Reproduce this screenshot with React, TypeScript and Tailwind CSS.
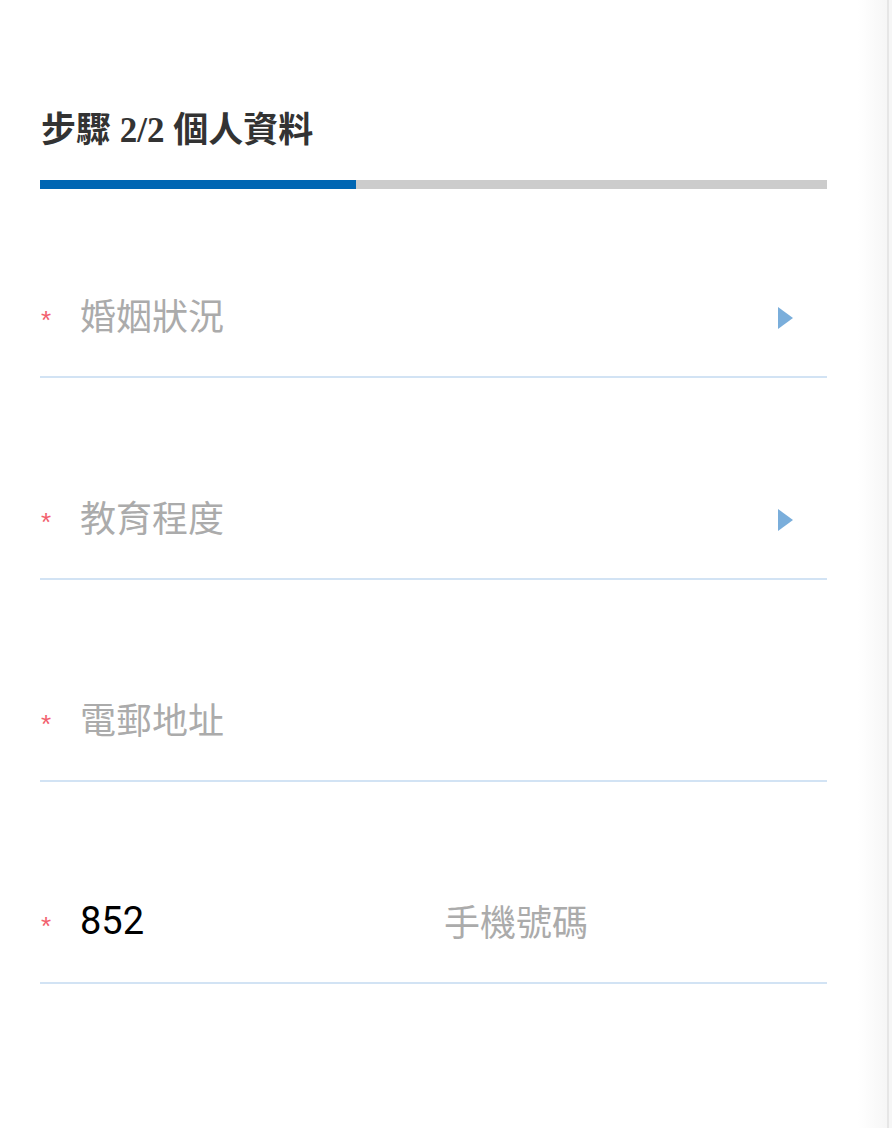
import React from "react";

const Arrow = () => (
  <svg width="15" height="22" viewBox="0 0 15 22" className="mr-[34px] shrink-0 translate-y-[1px]">
    <polygon points="0,0 15,11 0,22" fill="#7aaedb" />
  </svg>
);

const Field = ({
  label,
  arrow,
  first,
  prefix,
}: {
  label: string;
  arrow?: boolean;
  first?: boolean;
  prefix?: string;
}) => (
  <div
    className={`${first ? "mt-[98px]" : "mt-[111px]"} pb-[29px] border-b-2 border-[#d2e3f4]`}
  >
    <div className="flex items-center h-[60px]">
      <div className="w-[40px] shrink-0 flex items-center">
        <span
          className="ml-[1px] text-[26px] leading-none text-[#f2606e] translate-y-[3px]"
          style={{ fontFamily: '"Liberation Sans", sans-serif' }}
        >
          *
        </span>
      </div>
      {prefix && (
        <div
          className="w-[364px] shrink-0 text-[38px] leading-none text-black -translate-y-[2px]"
          style={{ fontFamily: 'Roboto, "Noto Sans CJK TC", sans-serif' }}
        >
          {prefix}
        </div>
      )}
      <div
        className="flex-1 text-[36px] leading-none text-[#ababab] -translate-y-[3px]"
        style={{ fontFamily: '"Noto Sans CJK TC", sans-serif' }}
      >
        {label}
      </div>
      {arrow && <Arrow />}
    </div>
  </div>
);

export default function App() {
  return (
    <div className="flex w-[892px] min-h-[1128px] bg-white">
      <div className="w-[858px] shrink-0 pl-[40px] pr-[31px] pt-[111px] bg-white">
        <h1
          className="text-[35px] leading-[40px] font-bold text-[#333333] ml-[1px]"
          style={{ fontFamily: '"Liberation Serif", "Noto Sans CJK TC", serif' }}
        >
          步驟 2/2 個人資料
        </h1>
        <div className="mt-[29px] h-[9px] flex bg-[#cccccc]">
          <div className="w-[316px] bg-[#0066b3]" />
        </div>
        <Field label="婚姻狀況" arrow first />
        <Field label="教育程度" arrow />
        <Field label="電郵地址" />
        <Field label="手機號碼" prefix="852" />
      </div>
      <div className="flex-1 flex">
        <div className="w-[29px] bg-gradient-to-r from-white to-[#f6f6f6]" />
        <div className="w-[2px] bg-[#e6e6e6]" />
        <div className="flex-1 bg-[#f6f6f6]" />
      </div>
    </div>
  );
}
